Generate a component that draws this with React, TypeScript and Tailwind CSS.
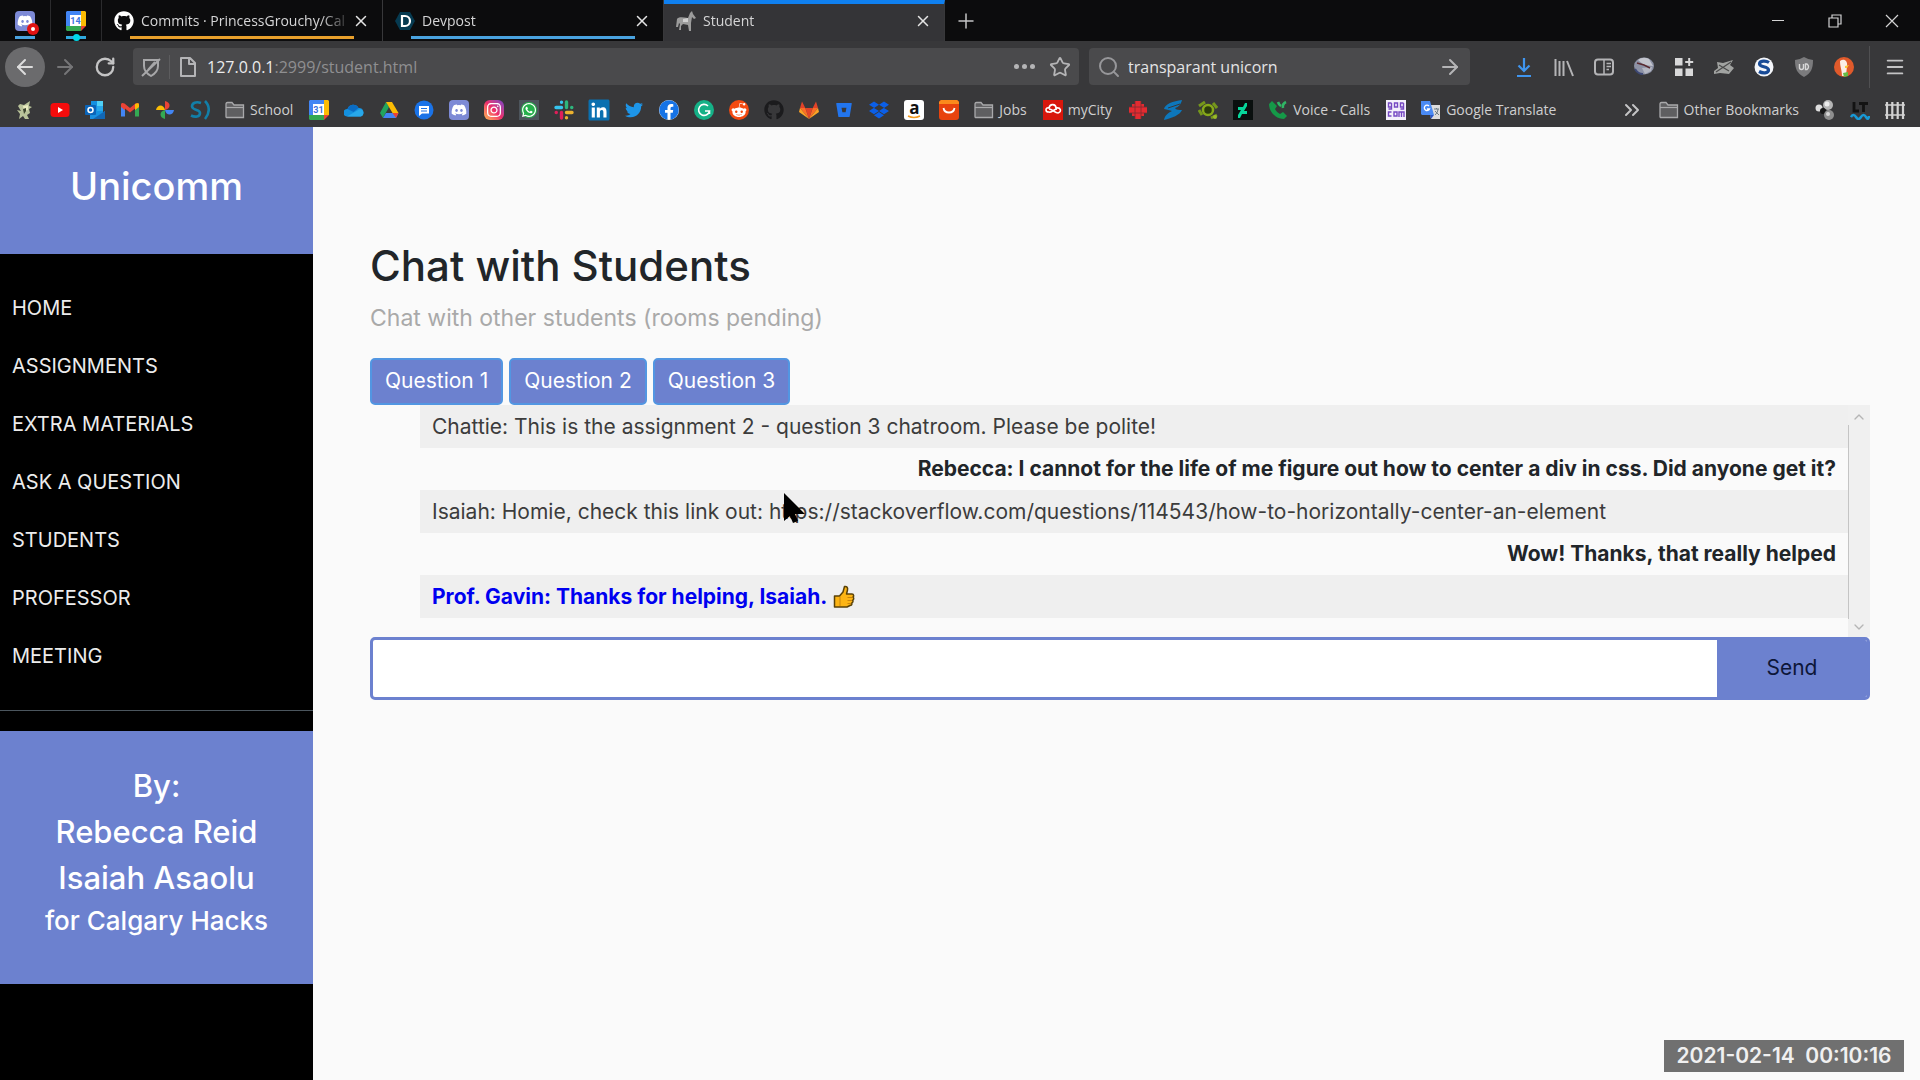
import { useState } from "react";
import {
  FaBitbucket,
  FaDiscord,
  FaDropbox,
  FaFacebook,
  FaGithub,
  FaInstagram,
  FaLinkedin,
  FaRedditAlien,
  FaTwitter,
  FaWhatsapp,
} from "react-icons/fa";
import { ArrowLeft, ArrowRight, ChevronDown, ChevronUp, ChevronsRight, Menu, Plus, RotateCw, Search, Star, X } from "lucide-react";

const navItems = ["HOME", "ASSIGNMENTS", "EXTRA MATERIALS", "ASK A QUESTION", "STUDENTS", "PROFESSOR", "MEETING"];

const messages = [
  { text: "Chattie: This is the assignment 2 - question 3 chatroom. Please be polite!", kind: "other" },
  { text: "Rebecca: I cannot for the life of me figure out how to center a div in css. Did anyone get it?", kind: "me" },
  { text: "Isaiah: Homie, check this link out: https://stackoverflow.com/questions/114543/how-to-horizontally-center-an-element", kind: "other" },
  { text: "Wow! Thanks, that really helped", kind: "me" },
  { text: "Prof. Gavin: Thanks for helping, Isaiah.", kind: "prof" },
];

const kindStyles: Record<string, string> = {
  other: "bg-[#efefef] text-[#3c3c3c]",
  me: "justify-end font-bold text-[#212529]",
  prof: "bg-[#efefef] font-bold text-[#0000f0]",
};

/* ---------- bookmark and tab icons ---------- */

function Svg({ children, box = "0 0 20 20" }: { children: React.ReactNode; box?: string }) {
  return (
    <svg viewBox={box} className="size-5 shrink-0" aria-hidden="true">
      {children}
    </svg>
  );
}

function Calendar({ day }: { day: string }) {
  return (
    <Svg>
      <path d="M1 0h14v5H5v10H0V1z" fill="#4285f4" />
      <path d="M15 0h4l1 1v14h-5z" fill="#fbbc04" />
      <path d="M0 15h15v5H1l-1-1z" fill="#34a853" />
      <path d="M15 15h5l-5 5z" fill="#ea4335" />
      <path d="M4 4h11v11H4z" fill="#fff" />
      <text x="9.5" y="13" textAnchor="middle" fontSize="9" fontWeight="700" fontFamily="Roboto, sans-serif" fill="#3b73e0">{day}</text>
    </Svg>
  );
}

function Folder() {
  return (
    <Svg>
      <path d="M1 17V4.500C1 3 1.500 2.500 2.500 2.500H7l2 2.500h9.500v12.500H1.500z" fill="#5f5f61" stroke="#a9a9ab" strokeWidth="1.300" />
      <path d="M1 7.500h18" stroke="#a9a9ab" strokeWidth="1.200" />
    </Svg>
  );
}

function Gecko() {
  return (
    <Svg>
      <path d="M5 4l4 1 6-4-1 5 3 1-3 2 1 4-3 2 2 4h-4l-2-3-4 3 1-5-3-4 4 1-3-5z" fill="#b9c39a" />
      <path d="M8 6l5-1v5l-4 1z" fill="#e9ecc0" />
      <path d="M8 9l3-1v3l-2 3z" fill="#3c452f" />
    </Svg>
  );
}

function YouTube() {
  return (
    <Svg>
      <rect x="0.500" y="3" width="19" height="14" rx="3.500" fill="#f50c0c" />
      <path d="M8 7v6l5-3z" fill="#fff" />
    </Svg>
  );
}

function Outlook() {
  return (
    <Svg>
      <path d="M6 1h12v15H6z" fill="#1490df" />
      <path d="M12 1h6v5h-6z" fill="#50d0f5" />
      <path d="M12 6h6v5h-6z" fill="#28a8ea" />
      <path d="M5 11l8 5 7-5v8H5z" fill="#1a8fdf" />
      <path d="M20 11v8H8z" fill="#1267b4" />
      <rect x="0" y="5" width="11" height="10" rx="1" fill="#0a64b8" />
      <circle cx="5.500" cy="10" r="2.500" fill="none" stroke="#fff" strokeWidth="1.500" />
    </Svg>
  );
}

function Gmail() {
  return (
    <Svg>
      <path d="M1 4v12.500h4V8z" fill="#4285f4" />
      <path d="M19 4v12.500h-4V8z" fill="#34a853" />
      <path d="M1 4.500C1 2.800 3 2.500 4.500 3.600L10 8l5.500-4.400C17 2.500 19 2.800 19 4.500V7l-4 3.200V8.500l-5 4-5-4v1.700L1 7z" fill="#ea4335" />
      <path d="M15 4v6l4-3V4.500C19 3 17 2.600 15 4z" fill="#fbbc04" />
    </Svg>
  );
}

function Photos() {
  return (
    <Svg>
      <path d="M10 1c6 1 6 8 0 9z" fill="#ea4335" />
      <path d="M19 10c-1 6-8 6-9 0z" fill="#4285f4" />
      <path d="M10 19c-6-1-6-8 0-9z" fill="#34a853" />
      <path d="M1 10c1-6 8-6 9 0z" fill="#fbbc04" />
    </Svg>
  );
}

function Drive() {
  return (
    <Svg>
      <path d="M7 2L1 13l3 5 6-11z" fill="#22a45d" />
      <path d="M7 2h6l6.500 11h-6z" fill="#fbbc04" />
      <path d="M4 18l3-5h12.500L17 18z" fill="#4285f4" />
      <path d="M13.500 13h6L17 18z" fill="#ea4335" />
    </Svg>
  );
}

function OneDrive() {
  return (
    <Svg>
      <path d="M3 16.500a3.800 3.800 0 0 1 .5-7.600A6 6 0 0 1 14.500 8a4.500 4.500 0 0 1 2.500 8.500z" fill="#1490df" />
      <path d="M3 16.500L15 9.500a3.500 3.500 0 0 1 1.500 7z" fill="#28a8ea" />
      <path d="M3.500 8.900A6 6 0 0 1 14.500 8l-5 4z" fill="#0a6cc4" />
    </Svg>
  );
}

function Messages() {
  return (
    <Svg>
      <circle cx="10" cy="10" r="9.500" fill="#1a73e8" />
      <path d="M5 6h10v7.500H8L5 16z" fill="#fff" />
      <path d="M7 8.500h6M7 11h6" stroke="#1a73e8" />
    </Svg>
  );
}

function DiscordTile({ badge = false }: { badge?: boolean }) {
  return (
    <span className="relative flex size-5 shrink-0 items-center justify-center rounded-sm bg-[#7d8ad6]">
      <FaDiscord className="size-4 text-white" />
      {badge && (
        <span className="absolute -right-1 -bottom-1 flex size-3 items-center justify-center rounded-full bg-[#e01212]">
          <span className="size-1 rounded-full bg-white" />
        </span>
      )}
    </span>
  );
}

function Slack() {
  return (
    <Svg>
      <g strokeWidth="3.400" strokeLinecap="round" fill="none">
        <path d="M2 7.500h5.500M7.500 2.200v.1" stroke="#36c5f0" />
        <path d="M12.500 2v5.500M17.700 7.500h.1" stroke="#2eb67d" />
        <path d="M12.500 12.500H18M12.500 17.700v.1" stroke="#ecb22e" />
        <path d="M7.500 12.500V18M2.200 12.500h.1" stroke="#e01e5a" />
      </g>
    </Svg>
  );
}

function Grammarly() {
  return (
    <Svg>
      <circle cx="10" cy="10" r="10" fill="#15b187" />
      <path d="M14 6a5.500 5.500 0 1 0 1.500 5H11M15.500 11v3" stroke="#fff" strokeWidth="1.600" fill="none" />
    </Svg>
  );
}

function Gitlab() {
  return (
    <Svg>
      <path d="M10 19l3.700-11H6.300z" fill="#e24329" />
      <path d="M10 19L6.300 8H1zM10 19l3.700-11H19z" fill="#fc6d26" />
      <path d="M1 8l-1 4 10 7zM19 8l1 4-10 7z" fill="#fca326" />
      <path d="M1 8l2-6.500L6.300 8zM19 8l-2-6.500L13.700 8z" fill="#e24329" />
    </Svg>
  );
}

function Amazon() {
  return (
    <span className="relative flex size-5 items-center justify-center rounded-[3px] bg-white">
      <span className="pb-1 text-[17px] leading-4 font-bold text-[#111]">a</span>
      <svg viewBox="0 0 20 20" className="absolute inset-0 size-5" aria-hidden="true">
        <path d="M4 16q6 3 12 0" stroke="#f29a1f" strokeWidth="1.500" fill="none" />
      </svg>
    </span>
  );
}

function AliExpress() {
  return (
    <Svg>
      <rect width="20" height="20" rx="3" fill="#e8430d" />
      <path d="M0 4V2l2-2h16l2 2v2z" fill="#fb8a1c" />
      <path d="M4.500 8c1 6 10 6 11 0" stroke="#fff" strokeWidth="1.800" fill="none" />
    </Svg>
  );
}

function MyCity() {
  return (
    <Svg>
      <path d="M0 0h20v20H0z" fill="#d8170c" />
      <path d="M6 12c-4 0-4-5 0-4 1-5 7-4 7 0 5-1 6 4 2 5-3 0-6-4-9-4M6 12c4 1 4-3 8-3" stroke="#fff" strokeWidth="1.600" fill="none" />
    </Svg>
  );
}

function Cbc() {
  return (
    <Svg>
      <path d="M7 1h6v3h3v3h3v6h-3v3h-3v3H7v-3H4v-3H1V7h3V4h3z" fill="#e32b31" />
      <path d="M1 7h18M1 13h18M7 1v18M13 1v18" stroke="#7d2c30" strokeWidth="0.800" />
    </Svg>
  );
}

function Streak() {
  return (
    <Svg>
      <path d="M19 0C10 1 2 4 1 9c3 1 6 1 8 2-4 2-7 4-8 9 8-2 16-5 18-10-3 0-6 0-7-2 4-1 6-4 7-8z" fill="#0d77bb" />
      <path d="M17 4L5 8" stroke="#38383a" fill="none" />
    </Svg>
  );
}

function Turtle() {
  return (
    <Svg>
      <circle cx="10" cy="10" r="5" fill="#2c3d0c" stroke="#86a819" strokeWidth="2.500" />
      <path d="M1 6l6-4M13 18l6-3M15 3l4 5M1 10l3 5" stroke="#75971b" strokeWidth="3" />
      <circle cx="17" cy="17" r="2" fill="#9ab929" />
    </Svg>
  );
}

function DeviantArt() {
  return (
    <Svg>
      <path d="M0 0h20v20H0z" fill="#0a0f0e" />
      <path d="M14 3v3l-3 5h3v3H9l-2 4H5v-3l3-5H5V7h5l2-4z" fill="#06d69a" />
    </Svg>
  );
}

function Phone() {
  return (
    <Svg>
      <path d="M4 1L1 4c0 8 7 15 15 15l3-3-4-4-3 2c-2-1-4-3-5-5l2-3z" fill="#159948" />
      <path d="M10 2q1 3 3 4M18 2q-4 2-3 6" stroke="#30b565" strokeWidth="2.600" fill="none" />
    </Svg>
  );
}

function Gog() {
  return (
    <Svg>
      <path d="M0 0h20v20H0z" fill="#f3effb" />
      <path d="M5.500 3h-3v4h3V3v6h-3M8.500 3h3v4h-3zM17.500 3h-3v4h3V3v6h-3M5.500 12h-3v4h3M8 12h3v4H8zM13 17v-5h5v5M15.500 12v5" stroke="#7447c2" strokeWidth="1.400" fill="none" />
    </Svg>
  );
}

function Translate() {
  return (
    <Svg>
      <path d="M8 5h11v14H10z" fill="#dcdcdc" />
      <path d="M0 1h9l4 14H1l-1-1z" fill="#4a8af4" />
      <path d="M13 15l-3 4-1-4z" fill="#2a56c6" />
      <path d="M8 6a2.700 2.700 0 1 0 .5 3H6" stroke="#fff" strokeWidth="1.300" fill="none" />
      <path d="M13 9h5M15.500 8v1M17 9c0 3-2 5-3 6M14 11l4 4" stroke="#6b7b85" fill="none" />
    </Svg>
  );
}

function Molecule() {
  return (
    <Svg>
      <circle cx="4" cy="8" r="3.500" fill="#dedede" />
      <circle cx="13" cy="5" r="5" fill="#b5b5b5" />
      <circle cx="12" cy="4" r="2.500" fill="#ececec" />
      <circle cx="8" cy="11" r="3" fill="#171717" />
      <circle cx="14" cy="15" r="5" fill="#8e8e8e" />
      <circle cx="13" cy="14" r="2" fill="#d5d5d5" />
    </Svg>
  );
}

function LanguageTool() {
  return (
    <Svg>
      <path d="M4 2v9h5M9 3.500h9M13.500 3v9" stroke="#131313" strokeWidth="2.800" fill="none" />
      <path d="M1 17q2.500-4 5 0t5 0 5 0 3-1" stroke="#1899d6" strokeWidth="2.500" fill="none" />
    </Svg>
  );
}

function Fence() {
  return (
    <Svg>
      <path d="M2 2v17M7.300 2v17M12.700 2v17M18 2v17" stroke="#d2d2d2" strokeWidth="2.200" />
      <path d="M0 5h20M0 15h20" stroke="#d2d2d2" strokeWidth="1.500" />
    </Svg>
  );
}

function Horse() {
  return (
    <Svg>
      <path d="M14 2l2-2 1 3 3 4-2 1-2-2-1 6v8h-2l-1-6-5-1-2 2v4H3l1-6-1-1-1 4H0l1-8c1-2 5-2 11-1z" fill="#9c9c9c" />
      <path d="M7 8l5-1v4H7z" fill="#cfcfcf" />
    </Svg>
  );
}

function Devpost() {
  return (
    <Svg>
      <path d="M5 1h10l5 9-5 9H5l-5-9z" fill="#063a50" />
      <path d="M7 5h3a5 5 0 0 1 0 10H7z" stroke="#fff" strokeWidth="2.200" fill="none" />
    </Svg>
  );
}

type Bookmark = { name: string; icon: React.ReactNode; label?: string };

const bookmarks: Bookmark[] = [
  { name: "Gecko", icon: <Gecko /> },
  { name: "YouTube", icon: <YouTube /> },
  { name: "Outlook", icon: <Outlook /> },
  { name: "Gmail", icon: <Gmail /> },
  { name: "Photos", icon: <Photos /> },
  {
    name: "S",
    icon: (
      <Svg>
        <path d="M11 3C6 1 2 3 2 6.500 3 11 10 9 10 13c0 4-5 4.500-9 2.500M15 1c5 5 5 12 0 18" stroke="#127fa8" strokeWidth="2.600" fill="none" />
      </Svg>
    ),
  },
  { name: "School", icon: <Folder />, label: "School" },
  { name: "Calendar", icon: <Calendar day="31" /> },
  { name: "OneDrive", icon: <OneDrive /> },
  { name: "Drive", icon: <Drive /> },
  { name: "Messages", icon: <Messages /> },
  { name: "Discord", icon: <DiscordTile /> },
  {
    name: "Instagram",
    icon: (
      <span className="flex size-5 items-center justify-center rounded-md bg-linear-to-tr from-[#fdb44b] via-[#ee2a6b] to-[#7a38c8]">
        <FaInstagram className="size-4 text-white" />
      </span>
    ),
  },
  {
    name: "WhatsApp",
    icon: (
      <span className="flex size-5 items-center justify-center bg-[#4d555c]">
        <span className="flex size-4 items-center justify-center rounded-full bg-[#25b04b]">
          <FaWhatsapp className="size-4 text-white" />
        </span>
      </span>
    ),
  },
  { name: "Slack", icon: <Slack /> },
  {
    name: "LinkedIn",
    icon: (
      <span className="flex size-5 items-center justify-center bg-white">
        <FaLinkedin className="size-6 shrink-0 text-[#0a70b0]" />
      </span>
    ),
  },
  { name: "Twitter", icon: <FaTwitter className="size-[18px] text-[#1d95e8]" /> },
  {
    name: "Facebook",
    icon: (
      <span className="flex size-5 items-center justify-center rounded-full bg-white">
        <FaFacebook className="size-5 text-[#1673e6]" />
      </span>
    ),
  },
  { name: "Grammarly", icon: <Grammarly /> },
  {
    name: "Reddit",
    icon: (
      <span className="flex size-5 items-center justify-center rounded-full bg-[#f34a10]">
        <FaRedditAlien className="size-4 text-white" />
      </span>
    ),
  },
  { name: "GitHub", icon: <FaGithub className="size-5 text-[#1b1b1d]" /> },
  { name: "GitLab", icon: <Gitlab /> },
  { name: "Bitbucket", icon: <FaBitbucket className="size-4 text-[#2275ee]" /> },
  { name: "Dropbox", icon: <FaDropbox className="size-5 text-[#0b5fe8]" /> },
  { name: "Amazon", icon: <Amazon /> },
  { name: "AliExpress", icon: <AliExpress /> },
  { name: "Jobs", icon: <Folder />, label: "Jobs" },
  { name: "myCity", icon: <MyCity />, label: "myCity" },
  { name: "CBC", icon: <Cbc /> },
  { name: "Streak", icon: <Streak /> },
  { name: "Turtle", icon: <Turtle /> },
  { name: "DeviantArt", icon: <DeviantArt /> },
  { name: "Voice", icon: <Phone />, label: "Voice - Calls" },
  { name: "GOG", icon: <Gog /> },
  { name: "Translate", icon: <Translate />, label: "Google Translate" },
];

const endBookmarks: Bookmark[] = [
  { name: "Other", icon: <Folder />, label: "Other Bookmarks" },
  { name: "Molecule", icon: <Molecule /> },
  { name: "LanguageTool", icon: <LanguageTool /> },
  { name: "Fence", icon: <Fence /> },
];

function BookmarkLink({ mark }: { mark: Bookmark }) {
  return (
    <a href="#" aria-label={mark.name} className="flex shrink-0 items-center gap-[5px]">
      <span className="flex size-5 items-center justify-center">{mark.icon}</span>
      {mark.label && <span className="pr-px whitespace-nowrap">{mark.label}</span>}
    </a>
  );
}

/* ---------- browser frame ---------- */

function Tab({ icon, title, line, active }: { icon: React.ReactNode; title: string; line?: string; active?: boolean }) {
  return (
    <div
      className={`relative flex h-[41px] w-[281px] items-center border-r border-[#38383a] px-3 ${
        active ? "border-t-4 border-t-[#0f80f0] bg-[#343437] pb-1" : ""
      }`}
    >
      <span className="size-5 shrink-0">{icon}</span>
      <span className="ml-[7px] flex-1 mask-r-from-85% whitespace-nowrap">{title}</span>
      <button aria-label="Close tab" className="shrink-0">
        <X className="size-[18px] text-[#e4e4e4]" />
      </button>
      {line && <span className={`absolute bottom-[2px] left-7 h-[3px] w-56 ${line}`} />}
    </div>
  );
}

function TabBar() {
  return (
    <div className="flex h-[41px] bg-[#0c0c0d] text-[14px] text-[#d5d5d6]">
      <div className="relative flex w-[51px] items-center justify-center border-r border-[#2b2b2d]">
        <DiscordTile badge />
        <span className="absolute bottom-[2px] h-[3px] w-5 bg-[#4aa3df]" />
      </div>
      <div className="relative flex w-[51px] items-center justify-center border-r border-[#2b2b2d]">
        <Calendar day="14" />
        <span className="absolute bottom-[2px] h-[3px] w-5 bg-[#2fa8dd]" />
        <span className="absolute bottom-0 size-[7px] rounded-full bg-[#00d8e8]" />
      </div>
      <Tab icon={<FaGithub className="size-5 text-white" />} title="Commits · PrincessGrouchy/Cal" line="bg-[#e8a02c]" />
      <Tab icon={<Devpost />} title="Devpost" line="bg-[#4aa3df]" />
      <Tab icon={<Horse />} title="Student" active />
      <button aria-label="New tab" className="flex w-[42px] items-center justify-center">
        <Plus className="size-6 text-[#c4c4c5]" strokeWidth={1.5} />
      </button>
      <div className="ml-auto flex text-[#d4d4d4]">
        <button aria-label="Minimize" className="flex w-[57px] items-center justify-center">
          <span className="h-px w-3 bg-[#d4d4d4]" />
        </button>
        <button aria-label="Restore" className="flex w-[57px] items-center justify-center">
          <svg viewBox="0 0 14 14" className="size-[14px]" fill="none" stroke="currentColor" strokeWidth="1.200">
            <path d="M1 4h9v9H1zM4 4V1h9v9h-3" />
          </svg>
        </button>
        <button aria-label="Close" className="flex w-[57px] items-center justify-center">
          <svg viewBox="0 0 14 14" className="size-[14px]" fill="none" stroke="currentColor" strokeWidth="1.200">
            <path d="M1 1l12 12M13 1L1 13" />
          </svg>
        </button>
      </div>
    </div>
  );
}

const toolIcons = [
  {
    name: "Downloads",
    icon: (
      <Svg>
        <path d="M10 1v13M4.500 8.500L10 14l5.500-5.500M3 19h14" stroke="#3f95ef" strokeWidth="2.200" fill="none" />
      </Svg>
    ),
  },
  {
    name: "Library",
    icon: (
      <Svg>
        <path d="M1.500 2v17M5.500 4v15M9.500 4v15M13 4l6 15" stroke="#b4b4b6" strokeWidth="2" />
      </Svg>
    ),
  },
  {
    name: "Sidebars",
    icon: (
      <Svg>
        <rect x="1" y="2.500" width="18" height="15" rx="3" stroke="#b4b4b6" strokeWidth="2" fill="none" />
        <path d="M10 3v14M12.500 6.500H17M12.500 9.500H17M12.500 12.500H15" stroke="#b4b4b6" strokeWidth="1.500" />
      </Svg>
    ),
  },
  {
    name: "Planet",
    icon: (
      <Svg>
        <ellipse cx="10" cy="9" rx="10" ry="8.500" fill="#8d92a5" />
        <path d="M4 3q5-4 11-1l4 7-9-1z" fill="#c3c5cd" />
        <path d="M8 11l10-1-1 4-6 3z" fill="#b4b7c2" />
        <path d="M3 6l7 2 6 3" stroke="#5a2a30" strokeWidth="1.500" fill="none" />
        <path d="M1 12q3 5 8 5" stroke="#3d4875" strokeWidth="2" fill="none" />
      </Svg>
    ),
  },
  {
    name: "Extensions",
    icon: (
      <Svg>
        <path d="M1 1h7.500v7.500H1zM1 11.500h7.500V19H1zM11.500 11.500H19V19h-7.500zM14.200 1h2v3h3v2h-3v3h-2V6h-3V4h3z" fill="#d8d8d9" />
      </Svg>
    ),
  },
  {
    name: "Zotero",
    icon: (
      <Svg>
        <path d="M0 14l4-3-1-6 6 1 10-3-3 5 4 3-5 6-9-1-6 1z" fill="#a1a3a1" />
        <path d="M2 15L17 5M5 8l10 6" stroke="#4a4a4a" strokeWidth="1.200" />
      </Svg>
    ),
  },
  {
    name: "Stylus",
    icon: (
      <Svg>
        <circle cx="10" cy="10" r="9.500" fill="#f4f6fa" />
        <path d="M15 5.500C12 3.500 5.500 3.500 5.500 7c0 3.500 9 2 9 6 0 3.500-6 3.500-9.500 1.500" stroke="#174a96" strokeWidth="3.200" fill="none" />
      </Svg>
    ),
  },
  {
    name: "uBlock",
    icon: (
      <Svg>
        <path d="M10 0q5 3 9 3c0 9-2 13-9 17C3 16 1 12 1 3q4 0 9-3z" fill="#7b7b7d" />
        <path d="M5.500 7v3.500a2 2 0 0 0 4 0V7M11.500 7v5.500h1.500q3-3 0-5.500z" stroke="#d8d8d8" strokeWidth="1.400" fill="none" />
      </Svg>
    ),
  },
  {
    name: "DuckDuckGo",
    icon: (
      <Svg>
        <circle cx="10" cy="10" r="10" fill="#e05a2b" />
        <path d="M6 4c4-3 8 0 7 5l-1 10-4 0C8 13 6 10 6 4z" fill="#fbeee6" />
        <path d="M11 9l4-1-2 3h-2z" fill="#fcc63a" />
        <path d="M9 16l5-1v4l-4 1z" fill="#65bc46" />
      </Svg>
    ),
  },
];

function Toolbar() {
  const [query, setQuery] = useState("transparant unicorn");

  return (
    <div className="flex h-[51px] items-center bg-[#38383a] px-[5px] text-[16px] text-[#b4b4b6]">
      <button aria-label="Back" className="flex size-10 items-center justify-center rounded-full bg-[#6b6b6d]">
        <ArrowLeft className="size-6 text-[#dcdcdc]" />
      </button>
      <button aria-label="Forward" className="flex size-10 items-center justify-center">
        <ArrowRight className="size-6 text-[#757577]" />
      </button>
      <button aria-label="Reload" className="mr-2 flex size-10 items-center justify-center">
        <RotateCw className="size-[22px] text-[#c4c4c5]" strokeWidth={2.5} />
      </button>

      <div className="flex h-[37px] flex-1 items-center rounded-sm bg-[#4a4a4c] pr-2 pl-2">
        <Svg>
          <path d="M3 3h14v6q0 6-7 10Q3 15 3 9zM1 19L19 2M7 13l7-8" stroke="#a7a7a9" strokeWidth="2" fill="none" />
        </Svg>
        <span className="mx-2 h-6 w-px bg-[#5c5c5e]" />
        <Svg>
          <path d="M3 1h9l5 5v13H3zM11 1v6h6" stroke="#b4b4b6" strokeWidth="2" strokeLinejoin="round" fill="none" />
        </Svg>
        <span className="ml-[9px] whitespace-nowrap text-[#8f8f91]">
          <span className="text-[#ececec]">127.0.0.1</span>:2999/student.html
        </span>
        <button aria-label="Page actions" className="ml-auto flex gap-[3px]">
          <span className="size-[5px] rounded-full bg-[#b4b4b6]" />
          <span className="size-[5px] rounded-full bg-[#b4b4b6]" />
          <span className="size-[5px] rounded-full bg-[#b4b4b6]" />
        </button>
        <button aria-label="Bookmark this page" className="ml-[14px]">
          <Star className="size-[22px] text-[#b4b4b6]" />
        </button>
      </div>

      <div className="ml-[10px] flex h-[37px] w-[381px] items-center rounded-sm bg-[#4a4a4c] px-2">
        <Search className="size-6 shrink-0 text-[#97979a]" />
        <input
          aria-label="Search"
          className="ml-[7px] min-w-0 flex-1 text-[#e4e4e5] outline-none"
          value={query}
          onChange={(e) => setQuery(e.target.value)}
        />
        <button aria-label="Go">
          <ArrowRight className="size-6 text-[#b4b4b6]" />
        </button>
      </div>

      <div className="ml-[34px] flex">
        {toolIcons.map((tool) => (
          <button key={tool.name} aria-label={tool.name} className="flex size-10 items-center justify-center">
            {tool.icon}
          </button>
        ))}
      </div>
      <span className="mx-[5px] h-[42px] w-px bg-[#505052]" />
      <button aria-label="Menu" className="flex size-10 items-center justify-center">
        <Menu className="size-[22px] text-[#c4c4c5]" />
      </button>
    </div>
  );
}

function BookmarksBar() {
  return (
    <nav aria-label="Bookmarks" className="flex h-[35px] items-center gap-[15px] bg-[#38383a] px-[15px] text-[14px] text-[#cfcfd0]">
      {bookmarks.map((mark) => (
        <BookmarkLink key={mark.name} mark={mark} />
      ))}
      <button aria-label="More bookmarks" className="ml-auto">
        <ChevronsRight className="size-6 text-[#c4c4c5]" />
      </button>
      {endBookmarks.map((mark) => (
        <BookmarkLink key={mark.name} mark={mark} />
      ))}
    </nav>
  );
}

/* ---------- page ---------- */

function Sidebar() {
  return (
    <aside className="w-[313px] shrink-0 bg-black text-center text-white">
      <h3 className="h-[127px] bg-[#6c81cf] pt-9 text-[38px] leading-[46px] font-medium">Unicomm</h3>
      <ul className="border-b border-[#4b565e] pt-[25px] pb-[25px] text-left text-[20px]">
        {navItems.map((item) => (
          <li key={item}>
            <a href="#" className="block px-3 py-[14px] leading-[30px] text-[#ececec]">
              {item}
            </a>
          </li>
        ))}
      </ul>
      <div className="mt-5 h-[253px] bg-[#6c81cf] pt-8 font-medium">
        <p className="text-[31px] leading-[46px]">By:</p>
        <p className="text-[31px] leading-[46px]">Rebecca Reid</p>
        <p className="text-[31px] leading-[46px]">Isaiah Asaolu</p>
        <p className="text-[26px] leading-[40px]">for Calgary Hacks</p>
      </div>
    </aside>
  );
}

function ThumbsUp() {
  return (
    <svg viewBox="0 0 22 24" className="ml-[6px] h-6 w-[22px]" aria-label="thumbs up">
      <path
        d="M1.500 11h5L10 7l1.500-5.500C14 1 15 3 14.500 5L13.500 9h5.500c2 0 2 2.500 1 3 1 1 1 2.500-.3 3.200.6 1.200.2 2.300-.9 2.800.5 1.500-.3 2.500-1.800 2.500L14 22H1.500z"
        fill="#fcb414"
        stroke="#5a4208"
        strokeWidth="1.500"
        strokeLinejoin="round"
      />
      <path d="M7 11.500V21M14.500 12.500H19M14.500 15.500H19M14.500 18.500H18" stroke="#c9840c" />
    </svg>
  );
}

function Cursor() {
  return (
    <svg viewBox="0 0 21 31" className="absolute top-[3px] left-[364px] h-[31px] w-[21px]" aria-hidden="true">
      <path d="M0 0v28l6-5 3 7 5-2-3-7h10z" fill="#000" />
    </svg>
  );
}

function ChatRoom() {
  const [draft, setDraft] = useState("");

  return (
    <section>
      <div className="flex gap-[6px] text-[21px] text-white">
        {["Question 1", "Question 2", "Question 3"].map((label) => (
          <button key={label} className="h-[47px] rounded-[5px] border-2 border-[#5296e2] bg-[#6c81cf] px-[13px] pb-[2px]">
            {label}
          </button>
        ))}
      </div>

      <div className="flex h-[232px]">
        <ul className="ml-[50px] grid h-[213px] flex-1 grid-rows-5 text-[21px]">
          {messages.map((msg, i) => (
            <li key={i} className={`relative flex items-center px-3 whitespace-nowrap ${kindStyles[msg.kind]}`}>
              {msg.text}
              {msg.kind === "prof" && <ThumbsUp />}
              {i === 2 && <Cursor />}
            </li>
          ))}
        </ul>
        <div className="flex w-[22px] flex-col items-center justify-between bg-[#f0f0f0] text-[#b5b5b5]">
          <ChevronUp className="mt-1 size-4" />
          <span className="w-px flex-1 self-start bg-[#c4c4c4]" />
          <ChevronDown className="mb-[2px] size-4" />
        </div>
      </div>

      <form
        className="flex h-[63px] overflow-hidden rounded-[5px] border-[3px] border-[#6c81cf] bg-white"
        onSubmit={(e) => {
          e.preventDefault();
          setDraft("");
        }}
      >
        <input
          aria-label="Message"
          className="flex-1 px-3 text-[20px] outline-none"
          value={draft}
          onChange={(e) => setDraft(e.target.value)}
        />
        <button className="w-[150px] bg-[#6c81cf] pb-[2px] text-[21px] text-[#0d1638]">Send</button>
      </form>
    </section>
  );
}

export default function App() {
  return (
    <div className="flex min-h-screen flex-col bg-[#fafafa] font-['Open_Sans',sans-serif]">
      <TabBar />
      <Toolbar />
      <BookmarksBar />
      <div className="flex flex-1 font-['Inter',sans-serif]">
        <Sidebar />
        <main className="flex-1 pt-28 pr-[50px] pl-[57px]">
          <h2 className="text-[42px] leading-[54px] font-medium text-[#212529]">Chat with Students</h2>
          <p className="mt-[10px] mb-[25px] text-[23px] leading-[30px] text-[#a9a9a9]">Chat with other students (rooms pending)</p>
          <ChatRoom />
        </main>
      </div>
      <time className="fixed right-4 bottom-2 flex h-8 w-60 items-center justify-center bg-[#707070] text-[21px] font-semibold whitespace-pre text-[#f0f0f0] font-['Inter',sans-serif]">
        2021-02-14  00:10:16
      </time>
    </div>
  );
}
